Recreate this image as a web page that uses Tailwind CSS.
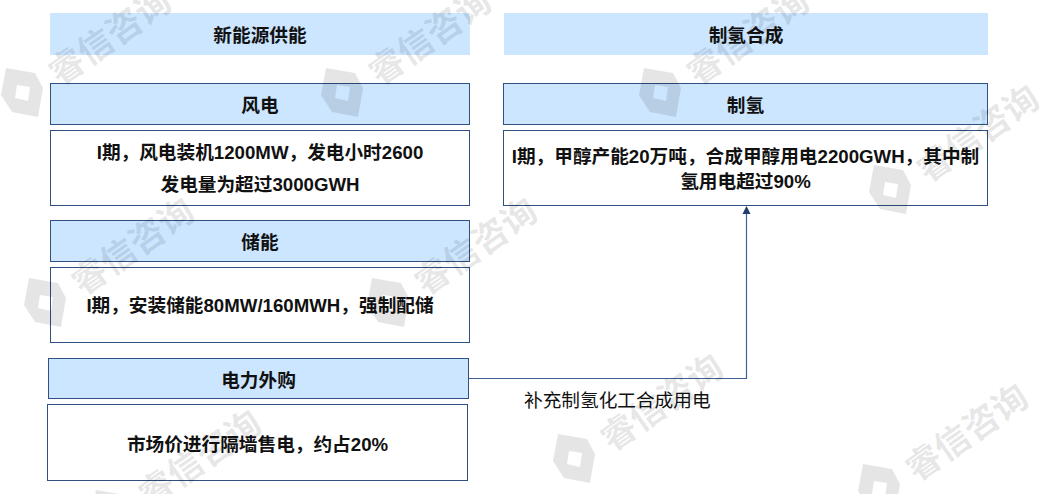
<!DOCTYPE html>
<html lang="zh-CN">

<head>
    <meta charset="UTF-8">
    <title>新能源供能与制氢合成</title>
    <script src="https://cdn.jsdelivr.net/npm/@tailwindcss/browser@4"></script>
</head>

<body class="bg-white">
    <div class="relative w-[1040px] h-[494px] overflow-hidden bg-white text-[#111] text-[18.67px] font-bold font-['Liberation_Sans','Noto_Sans_CJK_SC',sans-serif]">

        <div class="flex pt-[13px] pl-[50px] gap-[34px]">
            <!-- 左列 -->
            <section class="w-[420px] flex flex-col">
                <h2 class="h-[42px] pt-[3px] flex items-center justify-center bg-[#cce6ff] text-[18.67px] font-bold">新能源供能</h2>

                <h3 class="mt-[28px] h-[42px] pt-[4px] flex items-center justify-center bg-[#cce6ff] border border-[#2f5080] text-[18.67px] font-bold">风电</h3>
                <p class="mt-[5px] h-[76px] pt-[2px] flex items-center justify-center text-center leading-[32px] bg-white border border-[#2f5080]">I期，风电装机1200MW，发电小时2600<br>发电量为超过3000GWH</p>

                <h3 class="mt-[14px] h-[42px] pt-[4px] flex items-center justify-center bg-[#cce6ff] border border-[#2f5080] text-[18.67px] font-bold">储能</h3>
                <p class="mt-[5px] h-[76px] pt-[2px] flex items-center justify-center text-center bg-white border border-[#2f5080]">I期，安装储能80MW/160MWH，强制配储</p>

                <h3 class="mt-[15px] -ml-[2px] w-[421px] h-[41px] pt-[5px] flex items-center justify-center bg-[#cce6ff] border border-[#2f5080] text-[18.67px] font-bold">电力外购</h3>
                <p class="mt-[5px] -ml-[3px] w-[421px] h-[77px] pt-[5px] flex items-center justify-center text-center bg-white border border-[#2f5080]">市场价进行隔墙售电，约占20%</p>
            </section>

            <!-- 右列 -->
            <section class="w-[484px] flex flex-col">
                <h2 class="h-[42px] pt-[3px] flex items-center justify-center bg-[#cce6ff] text-[18.67px] font-bold">制氢合成</h2>

                <h3 class="mt-[28px] -ml-[1px] w-[485px] h-[42px] pt-[4px] flex items-center justify-center bg-[#cce6ff] border border-[#2f5080] text-[18.67px] font-bold">制氢</h3>
                <p class="mt-[5px] -ml-[1px] w-[485px] h-[76px] pt-[2px] flex items-center justify-center text-center leading-[25px] whitespace-nowrap bg-white border border-[#2f5080]">I期，甲醇产能20万吨，合成甲醇用电2200GWH，其中制<br>氢用电超过90%</p>
            </section>
        </div>

        <!-- 连接线 -->
        <svg class="absolute left-0 top-0 pointer-events-none" width="1040" height="494" viewBox="0 0 1040 494">
            <path d="M469 378.5H746.5V212" fill="none" stroke="#3f6090" stroke-width="1.2" />
            <polygon points="746.5,206 750.5,214 742.5,214" fill="#1f3d6e" />
        </svg>
        <span class="absolute left-[524px] top-[389px] text-[18.67px] leading-[24px] font-normal whitespace-nowrap">补充制氢化工合成用电</span>

        <!-- 水印 -->
        <div class="absolute left-0 top-0 w-full h-full pointer-events-none font-['Noto_Sans_CJK_SC',sans-serif] font-bold text-[35px] leading-none text-black/10">
            <div class="absolute left-0 top-[60px]">
                <svg class="block" width="44" height="58" viewBox="0 0 44 58"><path class="fill-black/10" fill-rule="evenodd" d="M6 8L35 13L43 28L38 57L12 52L1 35ZM17 25L30 27L28 41L15 38Z" /></svg>
                <span class="absolute left-[108px] top-[-26px] -translate-x-1/2 -translate-y-1/2 rotate-[-35deg] whitespace-nowrap">睿信咨询</span>
            </div>
            <div class="absolute left-[320px] top-[60px]">
                <svg class="block" width="44" height="58" viewBox="0 0 44 58"><path class="fill-black/10" fill-rule="evenodd" d="M6 8L35 13L43 28L38 57L12 52L1 35ZM17 25L30 27L28 41L15 38Z" /></svg>
                <span class="absolute left-[108px] top-[-26px] -translate-x-1/2 -translate-y-1/2 rotate-[-35deg] whitespace-nowrap">睿信咨询</span>
            </div>
            <div class="absolute left-[638px] top-[60px]">
                <svg class="block" width="44" height="58" viewBox="0 0 44 58"><path class="fill-black/10" fill-rule="evenodd" d="M6 8L35 13L43 28L38 57L12 52L1 35ZM17 25L30 27L28 41L15 38Z" /></svg>
                <span class="absolute left-[108px] top-[-26px] -translate-x-1/2 -translate-y-1/2 rotate-[-35deg] whitespace-nowrap">睿信咨询</span>
            </div>
            <div class="absolute left-[868px] top-[157px]">
                <svg class="block" width="44" height="58" viewBox="0 0 44 58"><path class="fill-black/10" fill-rule="evenodd" d="M6 8L35 13L43 28L38 57L12 52L1 35ZM17 25L30 27L28 41L15 38Z" /></svg>
                <span class="absolute left-[108px] top-[-26px] -translate-x-1/2 -translate-y-1/2 rotate-[-35deg] whitespace-nowrap">睿信咨询</span>
            </div>
            <div class="absolute left-[23px] top-[270px]">
                <svg class="block" width="44" height="58" viewBox="0 0 44 58"><path class="fill-black/10" fill-rule="evenodd" d="M6 8L35 13L43 28L38 57L12 52L1 35ZM17 25L30 27L28 41L15 38Z" /></svg>
                <span class="absolute left-[108px] top-[-26px] -translate-x-1/2 -translate-y-1/2 rotate-[-35deg] whitespace-nowrap">睿信咨询</span>
            </div>
            <div class="absolute left-[366px] top-[270px]">
                <svg class="block" width="44" height="58" viewBox="0 0 44 58"><path class="fill-black/10" fill-rule="evenodd" d="M6 8L35 13L43 28L38 57L12 52L1 35ZM17 25L30 27L28 41L15 38Z" /></svg>
                <span class="absolute left-[108px] top-[-26px] -translate-x-1/2 -translate-y-1/2 rotate-[-35deg] whitespace-nowrap">睿信咨询</span>
            </div>
            <div class="absolute left-[552px] top-[426px]">
                <svg class="block" width="44" height="58" viewBox="0 0 44 58"><path class="fill-black/10" fill-rule="evenodd" d="M6 8L35 13L43 28L38 57L12 52L1 35ZM17 25L30 27L28 41L15 38Z" /></svg>
                <span class="absolute left-[108px] top-[-26px] -translate-x-1/2 -translate-y-1/2 rotate-[-35deg] whitespace-nowrap">睿信咨询</span>
            </div>
            <div class="absolute left-[857px] top-[456px]">
                <svg class="block" width="44" height="58" viewBox="0 0 44 58"><path class="fill-black/10" fill-rule="evenodd" d="M6 8L35 13L43 28L38 57L12 52L1 35ZM17 25L30 27L28 41L15 38Z" /></svg>
                <span class="absolute left-[108px] top-[-26px] -translate-x-1/2 -translate-y-1/2 rotate-[-35deg] whitespace-nowrap">睿信咨询</span>
            </div>
            <div class="absolute left-[90px] top-[482px]">
                <svg class="block" width="44" height="58" viewBox="0 0 44 58"><path class="fill-black/10" fill-rule="evenodd" d="M6 8L35 13L43 28L38 57L12 52L1 35ZM17 25L30 27L28 41L15 38Z" /></svg>
                <span class="absolute left-[108px] top-[-26px] -translate-x-1/2 -translate-y-1/2 rotate-[-35deg] whitespace-nowrap">睿信咨询</span>
            </div>
        </div>
    </div>
</body>

</html>
